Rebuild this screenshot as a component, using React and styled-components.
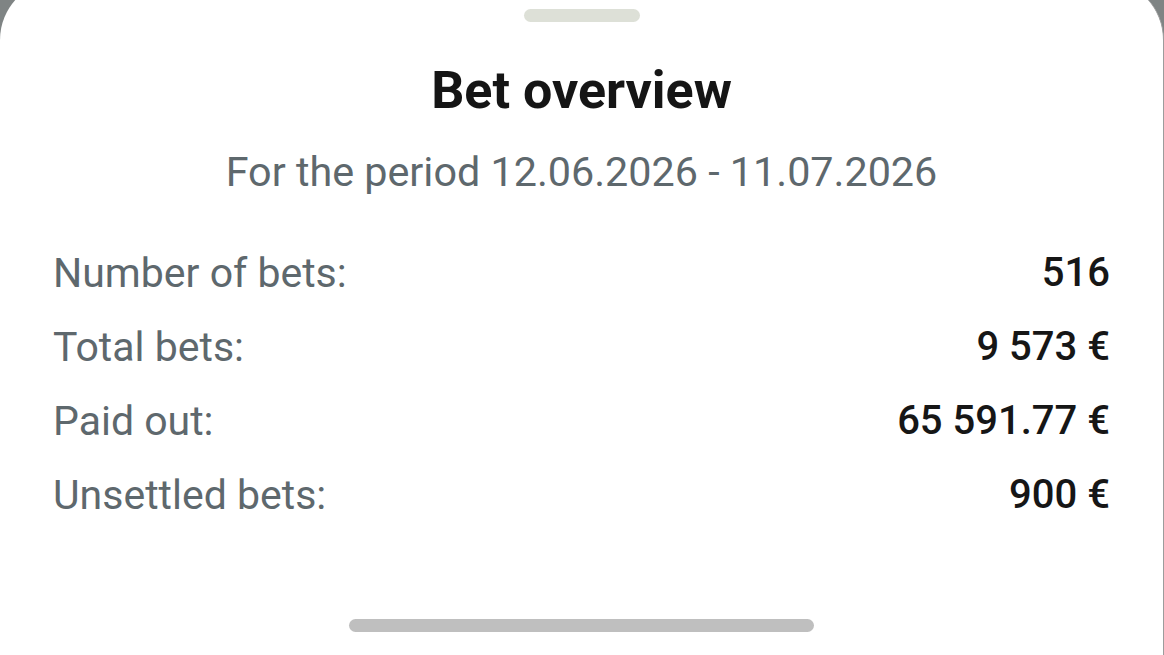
import React from "react";
import styled, { createGlobalStyle } from "styled-components";

const Global = createGlobalStyle`
  html, body {
    margin: 0;
    padding: 0;
    background: #7f8484;
    font-family: Roboto, "Noto Sans", sans-serif;
  }
  #root { height: 655px; overflow: hidden; }
`;

const Page = styled.div`
  height: 655px;
  overflow: hidden;
`;

const Sheet = styled.section`
  margin-top: -20px;
  width: 1164px;
  height: 675px;
  box-sizing: border-box;
  background: #ffffff;
  border-right: 1px solid #9c9c9c;
  border-radius: 60px 60px 0 0;
  display: flex;
  flex-direction: column;
  padding: 29px 53px 23px 53px;
`;

const Handle = styled.div`
  align-self: center;
  width: 116px;
  height: 13px;
  border-radius: 7px;
  background: #dde0d7;
`;

const Title = styled.h1`
  margin: 39px 0 0 0;
  text-align: center;
  font-size: 52px;
  line-height: 60px;
  font-weight: 700;
  color: #151515;
`;

const Subtitle = styled.p`
  margin: 27px 0 0 0;
  text-align: center;
  font-size: 41.3px;
  line-height: 48px;
  font-weight: 400;
  color: #5e686d;
`;

const List = styled.div`
  margin-top: 40px;
  display: flex;
  flex-direction: column;
`;

const Row = styled.div`
  display: flex;
  justify-content: space-between;
  align-items: center;
  height: 74px;
  line-height: 74px;
`;

const Label = styled.span`
  font-size: 41px;
  color: #5e686d;
  font-weight: 400;
`;

const Value = styled.span`
  font-size: 40px;
  color: #161616;
  font-weight: 500;
`;

const HomeBar = styled.div`
  margin-top: auto;
  align-self: center;
  width: 465px;
  height: 13px;
  border-radius: 7px;
  background: #bfbfbf;
`;

const rows = [
  ["Number of bets:", "516"],
  ["Total bets:", "9 573 €"],
  ["Paid out:", "65 591.77 €"],
  ["Unsettled bets:", "900 €"],
];

export default function App() {
  return (
    <Page>
      <Global />
      <Sheet>
        <Handle />
        <Title>Bet overview</Title>
        <Subtitle>For the period 12.06.2026 - 11.07.2026</Subtitle>
        <List>
          {rows.map(([l, v]) => (
            <Row key={l}>
              <Label>{l}</Label>
              <Value>{v}</Value>
            </Row>
          ))}
        </List>
        <HomeBar />
      </Sheet>
    </Page>
  );
}
